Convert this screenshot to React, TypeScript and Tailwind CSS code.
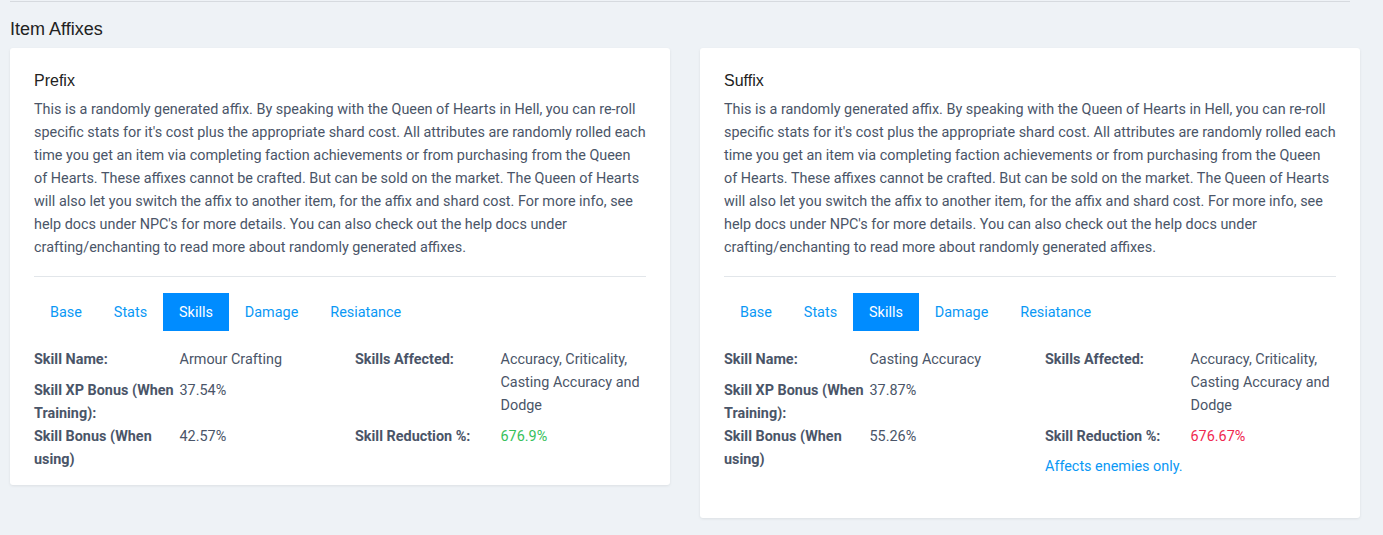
import React from 'react';

const BLURB =
  "This is a randomly generated affix. By speaking with the Queen of Hearts in Hell, you can re-roll specific stats for it's cost plus the appropriate shard cost. All attributes are randomly rolled each time you get an item via completing faction achievements or from purchasing from the Queen of Hearts. These affixes cannot be crafted. But can be sold on the market. The Queen of Hearts will also let you switch the affix to another item, for the affix and shard cost. For more info, see help docs under NPC's for more details. You can also check out the help docs under crafting/enchanting to read more about randomly generated affixes.";

const TABS = ['Base', 'Stats', 'Skills', 'Damage', 'Resiatance'];

type Affix = {
  title: string;
  skillName: string;
  xpBonus: string;
  skillBonus: string;
  reduction: string;
  reductionClass: string;
  enemiesOnly?: boolean;
};

const AFFIXES: Affix[] = [
  {
    title: 'Prefix',
    skillName: 'Armour Crafting',
    xpBonus: '37.54%',
    skillBonus: '42.57%',
    reduction: '676.9%',
    reductionClass: 'text-[#38c15b]',
  },
  {
    title: 'Suffix',
    skillName: 'Casting Accuracy',
    xpBonus: '37.87%',
    skillBonus: '55.26%',
    reduction: '676.67%',
    reductionClass: 'text-[#f0284f]',
    enemiesOnly: true,
  },
];

function Row({ label, children }: { label: string; children: React.ReactNode }) {
  return (
    <>
      <dt className="font-bold">{label}</dt>
      <dd className="mb-2">{children}</dd>
    </>
  );
}

function AffixCard({ affix }: { affix: Affix }) {
  return (
    <div className="bg-white rounded-[3px] shadow-[0_1px_3px_rgba(0,0,0,0.08)] px-6 pt-[21px] pb-[14px]">
      <h3 className="text-[16px] leading-6 text-[#222] mb-[5px] font-['Liberation_Sans',Arial,sans-serif]">
        {affix.title}
      </h3>
      <p>{BLURB}</p>
      <hr className="border-t border-[#e2e6ea] mt-[17px] mb-[16px]" />

      <div className="flex">
        {TABS.map((t) => (
          <button
            key={t}
            className={`h-[38px] px-4 ${
              t === 'Skills' ? 'bg-[#008cff] text-white' : 'text-[#0a98f5]'
            }`}
          >
            {t}
          </button>
        ))}
      </div>

      <div className="grid grid-cols-2 gap-x-[30px] mt-[17px]">
        <dl className="grid grid-cols-2 content-start">
          <Row label="Skill Name:">{affix.skillName}</Row>
          <Row label="Skill XP Bonus (When Training):">{affix.xpBonus}</Row>
          <Row label="Skill Bonus (When using)">{affix.skillBonus}</Row>
        </dl>
        <div>
          <dl className="grid grid-cols-2 content-start">
            <Row label="Skills Affected:">Accuracy, Criticality, Casting Accuracy and Dodge</Row>
            <Row label="Skill Reduction %:">
              <span className={affix.reductionClass}>{affix.reduction}</span>
            </Row>
          </dl>
          {affix.enemiesOnly && (
            <p className="text-[#0a98f5] -mt-px mb-[26px]">Affects enemies only.</p>
          )}
        </div>
      </div>
    </div>
  );
}

export default function App() {
  return (
    <div className="min-h-[535px] bg-[#eef2f6] px-[10px] pb-6 pt-px text-[14.4px] leading-[23px] text-[#4a5568] font-['Roboto',sans-serif]">
      <div className="border-t border-[#d6dadf] mr-[23px]" />
      <h2 className="text-[18px] leading-[26px] text-[#222] mt-[14px] mb-[6px] font-['Liberation_Sans',Arial,sans-serif]">
        Item Affixes
      </h2>
      <div className="grid grid-cols-2 gap-[30px] items-start w-[1350px]">
        {AFFIXES.map((a) => (
          <AffixCard key={a.title} affix={a} />
        ))}
      </div>
    </div>
  );
}
